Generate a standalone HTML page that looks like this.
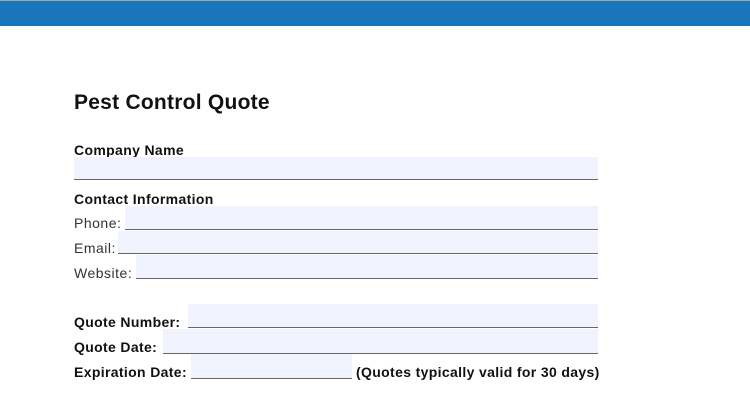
<!DOCTYPE html>
<html><head><meta charset="utf-8"><style>
body{margin:0;width:750px;height:403px;background:#fff;position:relative;overflow:hidden;font-family:"Liberation Sans",sans-serif;color:#111}
.bar{position:absolute;left:0;top:1px;width:750px;height:25px;background:#1976bb}
.top{position:absolute;left:0;top:0;width:750px;height:1px;background:#9aa}
.t{position:absolute;white-space:nowrap}
.b{font-weight:bold;font-size:14px;letter-spacing:0.35px}
.n{font-size:14px;color:#333;letter-spacing:0.5px}
.f{position:absolute;background:#f0f3fe;border-bottom:1px solid #666}
</style></head><body>
<div class="top"></div><div class="bar"></div>
<div class="t" style="left:74px;top:91px;font-size:21px;font-weight:bold;letter-spacing:0.25px">Pest Control Quote</div>
<div class="t b" style="left:74px;top:142px">Company Name</div>
<div class="f" style="left:74px;top:157px;width:524px;height:22px"></div>
<div class="t b" style="left:74px;top:191px">Contact Information</div>
<div class="t n" style="left:74px;top:215px">Phone:</div>
<div class="f" style="left:125px;top:206px;width:473px;height:23px"></div>
<div class="t n" style="left:74px;top:240px">Email:</div>
<div class="f" style="left:118px;top:231px;width:480px;height:22px"></div>
<div class="t n" style="left:74px;top:265px">Website:</div>
<div class="f" style="left:136px;top:255px;width:462px;height:23px"></div>
<div class="t b" style="left:74px;top:314px">Quote Number:</div>
<div class="f" style="left:188px;top:304px;width:410px;height:23px"></div>
<div class="t b" style="left:74px;top:339px">Quote Date:</div>
<div class="f" style="left:163px;top:329px;width:435px;height:24px"></div>
<div class="t b" style="left:74px;top:364px">Expiration Date:</div>
<div class="f" style="left:191px;top:354px;width:161px;height:24px"></div>
<div class="t b" style="left:356px;top:364px">(Quotes typically valid for 30 days)</div>
</body></html>
